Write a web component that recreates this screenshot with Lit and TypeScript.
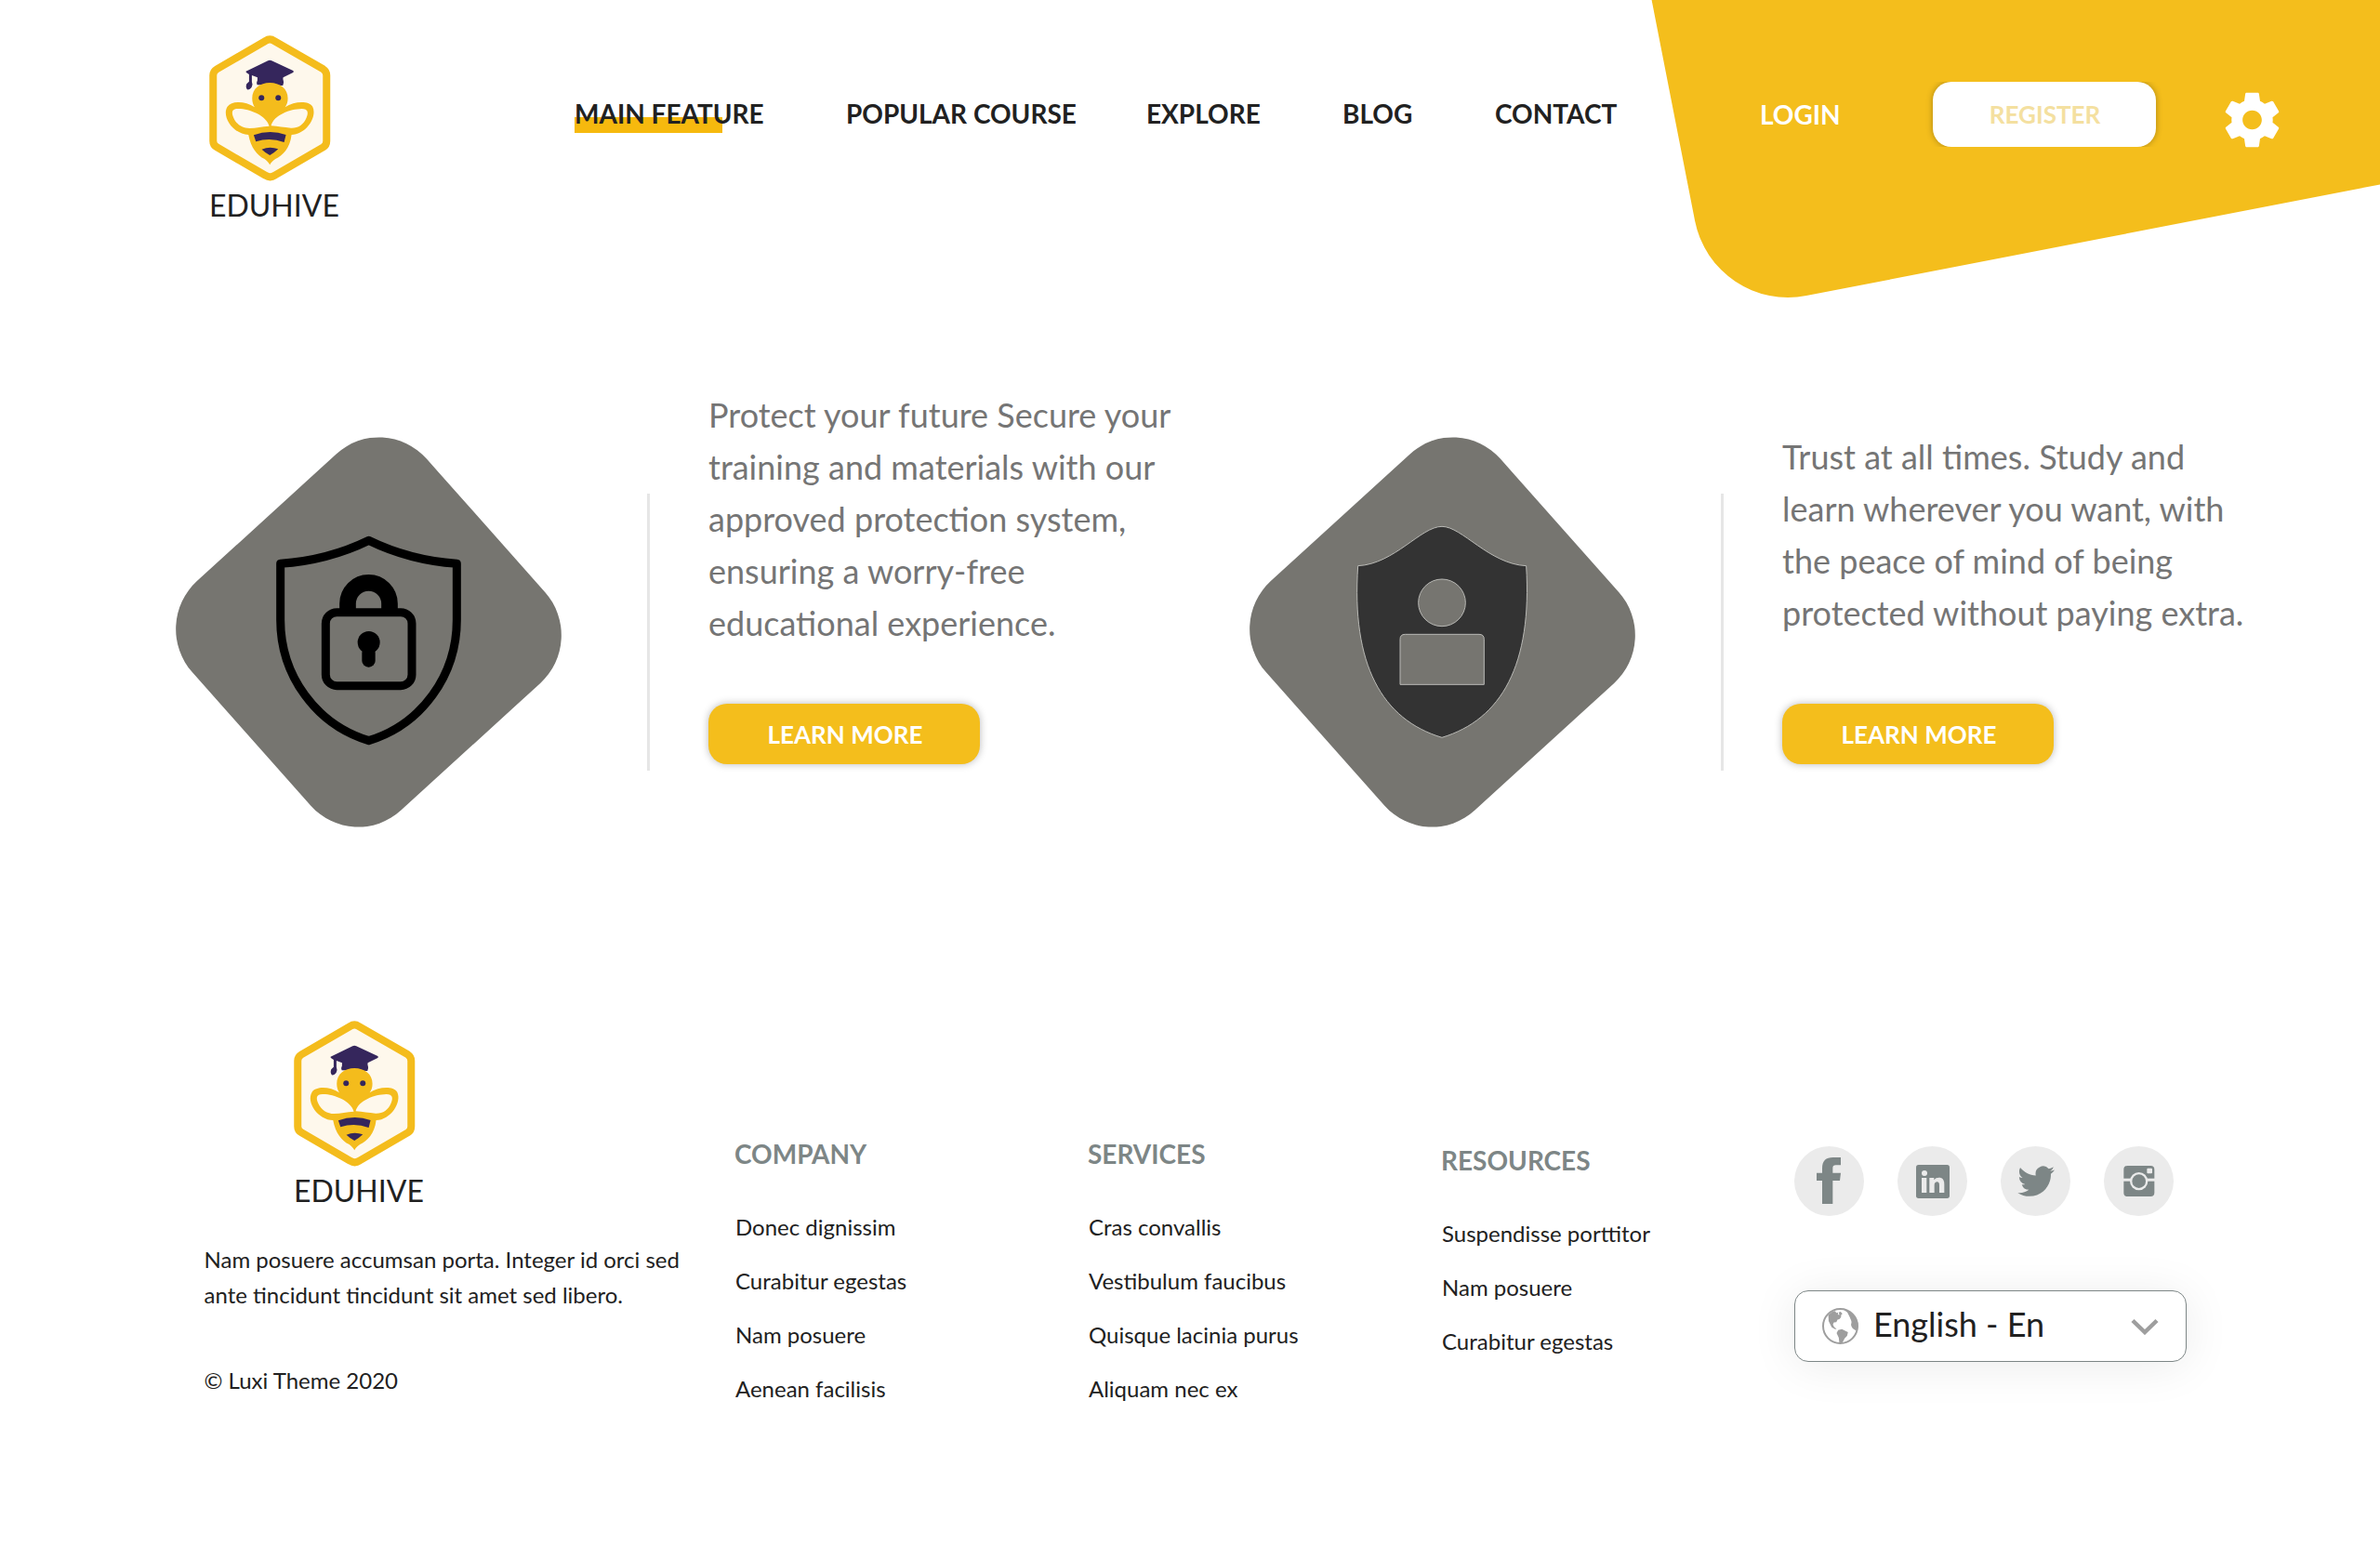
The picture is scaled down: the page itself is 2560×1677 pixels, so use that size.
import { LitElement, html, css, svg } from "lit";
import { customElement, property } from "lit/decorators.js";

@customElement("eduhive-logo")
class EduhiveLogo extends LitElement {
  static styles = css`
    :host { display: flex; flex-direction: column; width: 142px; gap: 6px; }
    .mark { display: block; width: 130.500px; height: 157px; }
    .name { font-size: 32px; line-height: 40px; color: #212121; white-space: nowrap; }
  `;
  render() {
    return html`
      <svg class="mark" viewBox="76 54 390 471">
        <path d="M257 72Q271 62 285 72L443 163Q454 170 454 183V395Q454 408 443 415L287 506Q272 516 257 506L100 415Q88 408 88 395V183Q88 170 100 163Z"
          fill="#fef8ec" stroke="#f4bc1c" stroke-width="24" stroke-linejoin="round"/>
        <path fill="#35265c" d="M194 170L265 136Q271 133 277 136L346 168Q350 171 346 174L314 190Q312 197 315 202Q317 208 313 216L230 214Q227 206 231 199V190L213 183V204Q217 212 212 222Q206 231 198 229Q192 222 196 211L204 203V180L196 175Q193 172 194 170Z"/>
        <path fill="#f4bc1c" d="M214 257C214 226 239 207 271 207S329 226 329 257C329 268 326 278 320 286C350 267 395 264 409 284C425 317 388 374 341 375C336 420 312 442 289 453C280 459 275 464 271 472C267 464 262 459 254 453C230 442 210 417 202 375C154 374 114 317 134 284C148 264 192 266 222 286C217 278 214 268 214 257Z"/>
        <g fill="#fef8ec">
          <path d="M269 347C260 312 203 290 168 291C147 291 147 304 154 320C163 342 184 354 205 354C228 353 245 348 269 347Z"/>
          <path d="M275 346C284 311 336 292 374 291C395 291 396 304 389 320C380 342 362 354 339 353C316 352 299 347 275 346Z"/>
        </g>
        <g fill="#35265c">
          <circle cx="244" cy="256" r="9"/>
          <circle cx="298" cy="256" r="9"/>
          <path d="M219 376Q271 357 323 375L317 399Q271 382 226 397Z"/>
          <path d="M245 422Q271 411 298 421Q288 431 271 441Q254 431 245 422Z"/>
        </g>
      </svg>
      <span class="name">EDUHIVE</span>
    `;
  }
}

const lockArt = svg`
  <g fill="none" stroke="#000" stroke-width="27" stroke-linejoin="round">
    <path d="M680 394C600 433 505 461 395 469V650C395 830 510 988 680 1040C850 988 964 830 964 650V469C855 461 760 433 680 394Z"/>
    <rect x="541" y="626" width="278" height="237" rx="36"/>
    <path stroke-width="53" d="M612 624V598A67.500 67.500 0 0 1 747 598V624"/>
  </g>
  <circle cx="680" cy="723" r="36"/>
  <rect x="658" y="735" width="43" height="68" rx="21"/>
`;

const personArt = svg`
  <g stroke="#b9b9b5" stroke-width="3">
    <path fill="#333" d="M422 476C540 470 625 349 693 349C758 349 845 470 965 476C985 795 885 972 693 1030C500 972 400 795 422 476Z"/>
    <circle cx="693" cy="595" r="76" fill="#767570"/>
    <path d="M558 859V713Q558 697 574 697H813Q829 697 829 713V859Z" fill="#767570"/>
  </g>
`;

@customElement("feature-card")
class FeatureCard extends LitElement {
  @property() art = "lock";
  @property({ attribute: false }) lines: string[] = [];
  static styles = css`
    :host { display: flex; width: 1155px; }
    .diamond { flex: none; width: 415px; height: 420px; margin-top: 52px; overflow: visible; }
    .rule { flex: none; width: 3px; height: 298px; margin: 113px 63.500px 0 91.500px; background: #e6e6e6; }
    .copy { display: flex; flex-direction: column; justify-content: space-between; align-items: flex-start; height: 404px; }
    .text { margin: 0; font-size: 36px; line-height: 56px; color: #757575; white-space: nowrap; }
    .short { padding-top: 45px; }
    .more { box-sizing: border-box; width: 292px; height: 65px; padding: 0 0 0 2px; border: 0; border-radius: 20px; background: #f4be1c;
      color: #fff; font: 700 26px/66px Lato, sans-serif; text-align: center; box-shadow: 0 0 8px rgba(0,0,0,.28); }
  `;
  render() {
    const lock = this.art === "lock";
    return html`
      <svg class="diamond" viewBox="${lock ? 57 : 72} 60 1245 1260">
        <rect x="-495" y="-512" width="990" height="1024" rx="207" fill="#767570" transform="translate(${lock ? 679.5 : 694.5} 690) scale(.993 1.006) rotate(48)"/>
        ${lock ? lockArt : personArt}
      </svg>
      <div class="rule"></div>
      <div class="copy">
        <p class="text ${this.lines.length < 5 ? "short" : ""}">${this.lines.map((l, i) => html`${i ? html`<br>` : ""}${l}`)}</p>
        <button class="more">LEARN MORE</button>
      </div>
    `;
  }
}

const socials = [
  svg`<path d="M180 255V180H162V155H180V141C180 116 192 105 215 105H240V130H224C217 130 214 133 214 140V155H240L237 180H214V255Z"/>`,
  svg`<g transform="translate(-333 0)"><rect x="483" y="129" width="108" height="108" rx="8"/>
    <g fill="#ebebeb"><circle cx="510" cy="156" r="9"/><rect x="501" y="171" width="16" height="48"/>
    <path d="M526 171H541V178C545 172 550 170 557 170C570 170 574 179 574 192V219H558V195C558 188 556 184 551 184C545 184 542 188 542 195V219H526Z"/></g></g>`,
  svg`<g transform="translate(145 122.500) scale(4.960)"><path d="M23.953 4.570a10 10 0 01-2.825.775 4.958 4.958 0 002.163-2.723c-.951.555-2.005.959-3.127 1.184a4.920 4.920 0 00-8.384 4.482C7.690 8.095 4.067 6.130 1.640 3.162a4.822 4.822 0 00-.666 2.475c0 1.710.870 3.213 2.188 4.096a4.904 4.904 0 01-2.228-.616v.060a4.923 4.923 0 003.946 4.827 4.996 4.996 0 01-2.212.085 4.936 4.936 0 004.604 3.417 9.867 9.867 0 01-6.102 2.105c-.390 0-.779-.023-1.170-.067a13.995 13.995 0 007.557 2.209c9.053 0 13.998-7.496 13.998-13.985 0-.210 0-.420-.015-.630A9.935 9.935 0 0024 4.590z"/></g>`,
  svg`<g transform="translate(-999 0)"><rect x="1153" y="132" width="99" height="99" rx="12"/>
    <rect x="1150" y="173" width="105" height="9" fill="#ebebeb"/>
    <circle cx="1202" cy="182" r="29" fill="#ebebeb"/><circle cx="1202" cy="182" r="22"/>
    <rect x="1228" y="140" width="17" height="17" rx="3" fill="#ebebeb"/></g>`,
];

const columns = [
  { title: "COMPANY", links: ["Donec dignissim", "Curabitur egestas", "Nam posuere", "Aenean facilisis"] },
  { title: "SERVICES", links: ["Cras convallis", "Vestibulum faucibus", "Quisque lacinia purus", "Aliquam nec ex"] },
  { title: "RESOURCES", links: ["Suspendisse porttitor", "Nam posuere", "Curabitur egestas"] },
];

@customElement("app-root")
class AppRoot extends LitElement {
  static styles = css`
    :host { display: block; width: 2560px; height: 1677px; overflow: hidden; background: #fff; font-family: Lato, sans-serif; color: #212121; }
    .header { position: relative; display: flex; align-items: flex-start; height: 418px; padding-left: 225px; box-sizing: border-box; }
    .swoosh { position: absolute; top: 0; right: 0; width: 790px; height: 330px; }
    .brand { margin-top: 38px; }
    .nav { display: grid; grid-template-columns: 292px 323px 211px 164px 164px; margin: 105px 0 0 251px; font-size: 28px; font-weight: 700; line-height: 34px; }
    .link { white-space: nowrap; }
    .active { justify-self: start; background: linear-gradient(#f6b90e, #f6b90e) 0 21px / 159px 17px no-repeat; padding-bottom: 6px; }
    .account { position: relative; display: flex; align-items: flex-start; margin-left: 121px; }
    .login { width: 186px; margin-top: 106px; color: #fff; font-size: 28px; font-weight: 700; line-height: 34px; }
    .register { width: 240px; height: 70px; margin: 88px 38px 0 0; padding: 0; border: 0; border-radius: 20px; background: #fff; color: #f4e0a0;
      font: 700 26px/70px Lato, sans-serif; text-align: center; box-shadow: 0 0 7px rgba(0,0,0,.3); clip-path: inset(0 -8px); }
    .register-label { padding-left: 1px; }
    .gear { width: 71px; height: 70px; margin: 94px 0 0 30px; }
    .features { display: flex; height: 680px; padding-left: 189px; }
    .footer { display: grid; grid-template-columns: 570.500px 380px 380px 380px 422px; padding-left: 219.500px; }
    .footbrand { margin-left: 96.500px; }
    .about { margin: 0; font-size: 24px; line-height: 38px; white-space: nowrap; }
    .about.first { margin-top: 35px; }
    .about.copyright { margin-top: 54px; }
    .column { padding-top: 126px; }
    .column.low { padding-top: 133px; }
    .title { margin: 0 0 33px; font-size: 28px; font-weight: 700; line-height: 34px; color: #7d8686; }
    .entry { padding-left: 1px; font-size: 24px; line-height: 58px; white-space: nowrap; }
    .side { padding-top: 135px; }
    .socials { display: flex; gap: 36px; }
    .social { width: 75px; height: 75px; border-radius: 50%; background: #ebebeb; fill: #7d8686; }
    .select { display: flex; align-items: center; box-sizing: border-box; width: 422px; height: 77px; margin-top: 80px; padding: 0 29px; border: 1px solid #7d8686;
      border-radius: 15px; background: #fff; box-shadow: 0 4px 50px rgba(0,0,0,.08); font-size: 36px; line-height: 44px; }
    .globe { width: 39px; height: 39px; margin-right: 16px; }
    .lang { flex: 1; margin-top: -6px; }
    .chevron { width: 30px; height: 18px; }
  `;
  render() {
    return html`
      <header class="header">
        <svg class="swoosh" viewBox="1770 0 790 330">
          <path fill="#f4be1c" d="M1776.600 0L1823.200 238A102 102 0 0 0 1943 318L2560 198.500V0Z"/>
        </svg>
        <eduhive-logo class="brand"></eduhive-logo>
        <nav class="nav">
          <span class="link active">MAIN FEATURE</span>
          <span class="link">POPULAR COURSE</span>
          <span class="link">EXPLORE</span>
          <span class="link">BLOG</span>
          <span class="link">CONTACT</span>
        </nav>
        <div class="account">
          <span class="login">LOGIN</span>
          <button class="register"><span class="register-label">REGISTER</span></button>
          <svg class="gear" viewBox="0 0 24 24" preserveAspectRatio="none" fill="#fff">
            <path d="M19.430 12.980c.040-.320.070-.640.070-.980s-.030-.660-.070-.980l2.110-1.650c.190-.150.240-.420.120-.640l-2-3.460c-.120-.220-.390-.300-.610-.220l-2.490 1c-.520-.400-1.080-.730-1.690-.980l-.380-2.650C14.460 2.180 14.250 2 14 2h-4c-.250 0-.460.180-.490.420l-.380 2.650c-.610.250-1.170.590-1.690.980l-2.490-1c-.230-.090-.490 0-.610.220l-2 3.460c-.130.220-.070.490.120.640l2.110 1.650c-.040.320-.070.650-.070.980s.030.660.070.980l-2.110 1.650c-.190.150-.240.420-.120.640l2 3.460c.120.220.390.300.610.220l2.490-1c.520.400 1.080.730 1.690.980l.380 2.650c.030.240.240.420.490.420h4c.250 0 .460-.180.490-.420l.380-2.650c.610-.250 1.170-.590 1.690-.980l2.490 1c.230.090.490 0 .610-.220l2-3.460c.120-.220.070-.490-.120-.640l-2.110-1.650zM12 15.500c-1.930 0-3.500-1.570-3.500-3.500s1.570-3.500 3.500-3.500 3.500 1.570 3.500 3.500-1.570 3.500-3.500 3.500z"/>
          </svg>
        </div>
      </header>

      <main class="features">
        <feature-card art="lock" .lines=${["Protect your future Secure your", "training and materials with our", "approved protection system,", "ensuring a worry-free", "educational experience."]}></feature-card>
        <feature-card art="person" .lines=${["Trust at all times. Study and", "learn wherever you want, with", "the peace of mind of being", "protected without paying extra."]}></feature-card>
      </main>

      <footer class="footer">
        <div>
          <eduhive-logo class="footbrand"></eduhive-logo>
          <p class="about first">Nam posuere accumsan porta. Integer id orci sed<br>ante tincidunt tincidunt sit amet sed libero.</p>
          <p class="about copyright">© Luxi Theme 2020</p>
        </div>
        ${columns.map((c) => html`
          <div class="column ${c.title === "RESOURCES" ? "low" : ""}">
            <h3 class="title">${c.title}</h3>
            ${c.links.map((l) => html`<div class="entry">${l}</div>`)}
          </div>`)}
        <div class="side">
          <div class="socials">${socials.map((s) => html`<svg class="social" viewBox="90 69 225 225">${s}</svg>`)}</div>
          <div class="select">
            <svg class="globe" viewBox="180 590 118 118">
              <circle cx="239" cy="649" r="56" fill="none" stroke="#9e9e9e" stroke-width="6"/>
              <g fill="#9e9e9e">
                <path d="M200 613L214 601L222 600L226 606L232 604L231 611L236 613L234 604L240 602L246 609L242 612L241 620L236 626L230 628L226 636L218 637L215 644L219 652L227 658L222 659L211 653L205 641L201 632Z"/>
                <path d="M247 593C275 597 297 622 297 649C297 654 294 661 290 663C282 660 274 653 274 643C278 633 273 629 270 620L262 604Z"/>
                <path d="M232 662L244 659L264 669L261 681L253 689L246 703L236 705L234 687L227 672Z"/>
              </g>
            </svg>
            <span class="lang">English - En</span>
            <svg class="chevron" viewBox="0 0 30 18"><path d="M2 2.500L15 15L28 2.500" fill="none" stroke="#9e9e9e" stroke-width="4.500"/></svg>
          </div>
        </div>
      </footer>
    `;
  }
}
